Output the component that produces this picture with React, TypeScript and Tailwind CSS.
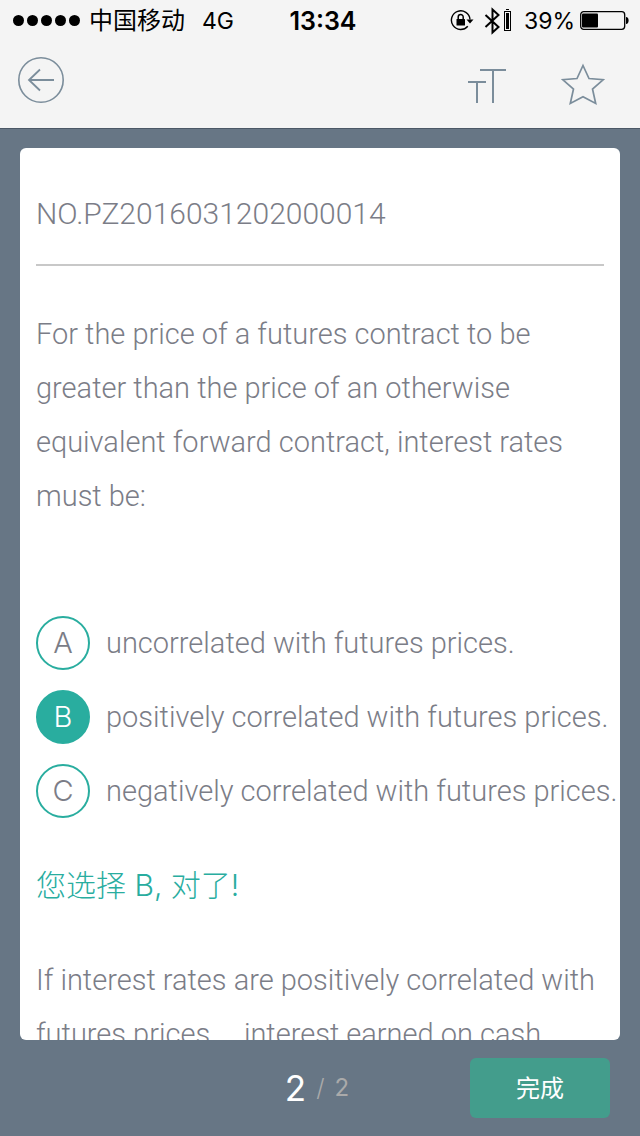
import React, { useState } from 'react'

const question = {
  number: 'NO.PZ2016031202000014',
  text: 'For the price of a futures contract to be greater than the price of an otherwise equivalent forward contract, interest rates must be:',
  options: [
    { key: 'A', label: 'uncorrelated with futures prices.' },
    { key: 'B', label: 'positively correlated with futures prices.' },
    { key: 'C', label: 'negatively correlated with futures prices.' },
  ],
  explanation: 'If interest rates are positively correlated with futures prices,\u00a0\u00a0\u00a0 interest earned on cash',
}

function StatusBar() {
  return (
    <div className="grid h-[42px] grid-cols-[1fr_auto_1fr] items-center pr-2.5 pl-3 text-[23px] leading-10 text-black">
      <div className="flex items-center">
        <svg width="70" height="12" viewBox="0 0 70 12" aria-hidden="true">
          {[6.5, 20.5, 34.5, 48.5, 62.5].map((cx) => (
            <circle key={cx} cx={cx} cy="5.5" r="5.5" />
          ))}
        </svg>
        <span className="ml-[7px] text-[24px]">中国移动</span>
        <span className="ml-[17px]">4G</span>
      </div>
      <div className="pl-1 text-[25px] font-semibold">13:34</div>
      <div className="flex items-center justify-end">
        {/* Rotation lock */}
        <svg width="24" height="22" viewBox="0 0 24 22" fill="none" stroke="#000" aria-hidden="true">
          <path d="M17.8 16.2A9.3 9.3 0 1 1 20 9.5" strokeWidth="1.4" />
          <path d="M16.5 9.5h7l-3.5 4z" fill="#000" stroke="none" />
          <rect x="6.5" y="9" width="8.5" height="6.5" rx="0.5" fill="#000" stroke="none" />
          <path d="M8.2 9.5V7a2.500 2.500 0 0 1 5 0v2.500" strokeWidth="1.5" />
        </svg>
        {/* Bluetooth with device battery */}
        <svg className="ml-2.5" width="28" height="28" viewBox="0 0 28 28" fill="none" stroke="#000" aria-hidden="true">
          <path d="M1.5 8l13 12-6 5.5v-23l6 5.500-13 12" strokeWidth="2" />
          <rect x="20.500" y="4.500" width="6" height="19" strokeWidth="1" />
          <path d="M22 2.500h3" strokeWidth="1" />
          <path d="M22 6h3v16h-3z" fill="#000" stroke="none" />
        </svg>
        <span className="ml-3">39%</span>
        <svg className="ml-[5px]" width="50" height="20" viewBox="0 0 50 20" fill="none" aria-hidden="true">
          <rect x="0.7" y="0.7" width="44" height="17.6" rx="3" stroke="#000" strokeWidth="1.3" />
          <rect x="2" y="2.5" width="16" height="14" rx="1" fill="#000" />
          <path d="M46 6c3.500 0 3.500 7 0 7z" fill="#000" />
        </svg>
      </div>
    </div>
  )
}

function Toolbar() {
  return (
    <div className="flex h-[86px] items-start justify-between pr-[35px] pl-[18px] text-[#7b8d9b]">
      <button type="button" aria-label="Back" className="mt-[15px]">
        <svg width="46" height="46" viewBox="0 0 46 46" fill="none" stroke="currentColor">
          <circle cx="23" cy="23" r="22.2" strokeWidth="1.6" />
          <path d="M36 23H11M22 12.500L11 23l11 10.500" strokeWidth="1.8" />
        </svg>
      </button>
      <div className="mt-5 flex gap-[55px]">
        <button type="button" aria-label="Text size">
          <svg width="38" height="44" viewBox="0 0 38 44" fill="none" stroke="currentColor" strokeWidth="2">
            <path d="M12 8h26M25 8v33M0 20h18M9 20v21" />
          </svg>
        </button>
        <button type="button" aria-label="Favorite">
          <svg width="44" height="44" viewBox="0 0 44 44" fill="none" stroke="currentColor" strokeWidth="1.7">
            <path d="M22 3.500l6 13 14.300 1.100-10.800 9.400 3.200 14.500L22 34.700 9.300 41.500 12.500 27 1.700 17.600 16 16.500z" />
          </svg>
        </button>
      </div>
    </div>
  )
}

export default function App() {
  const [selected, setSelected] = useState('B')

  return (
    <div className="flex h-screen flex-col bg-[#677685] font-['Inter','Noto_Sans_CJK_SC',sans-serif]">
      <header className="border-b border-[#4b5866] bg-[#f4f4f4]">
        <StatusBar />
        <Toolbar />
      </header>

      <main className="mx-5 mt-[19px] min-h-0 flex-1 overflow-hidden rounded-md bg-white px-4 pt-[39px] font-['Roboto','Noto_Sans_CJK_SC',sans-serif] text-[29px] leading-[54px] font-light text-[#7b7d87]">
        <h1 className="text-[30px]">{question.number}</h1>
        <hr className="mt-[23px] border-t-2 border-[#c8c8c8]" />
        <p className="mt-[41px]">{question.text}</p>

        <div role="radiogroup" aria-label="Answer" className="mt-[93px] space-y-5">
          {question.options.map((option) => (
            <label key={option.key} className="relative flex items-center gap-4 whitespace-nowrap">
              <input
                type="radio"
                name="answer"
                className="peer sr-only"
                checked={selected === option.key}
                onChange={() => setSelected(option.key)}
              />
              <span className="flex size-[54px] shrink-0 items-center justify-center rounded-full border-2 border-[#29ad9f] font-['Inter',sans-serif] peer-checked:bg-[#29ad9f] peer-checked:text-white">
                {option.key}
              </span>
              <span>{option.label}</span>
            </label>
          ))}
        </div>

        <p className="mt-10 font-['Inter','Noto_Sans_CJK_SC',sans-serif] text-[30px] text-[#29ad9f]">您选择 B, 对了!</p>
        <p className="mt-[41px]">{question.explanation}</p>
      </main>

      <footer className="grid h-24 grid-cols-[1fr_auto_1fr] items-center px-[30px]">
        <div className="col-start-2 mr-1.5 flex items-center gap-2.5 text-[24px] leading-9 text-[#aaaaaa]">
          <span className="text-[35px] text-white">2</span>
          <span className="font-light">/</span>
          <span>2</span>
        </div>
        <button type="button" className="h-[60px] w-[140px] justify-self-end rounded-md bg-[#439d8c] pt-0.5 text-[24px] text-white">
          完成
        </button>
      </footer>
    </div>
  )
}
